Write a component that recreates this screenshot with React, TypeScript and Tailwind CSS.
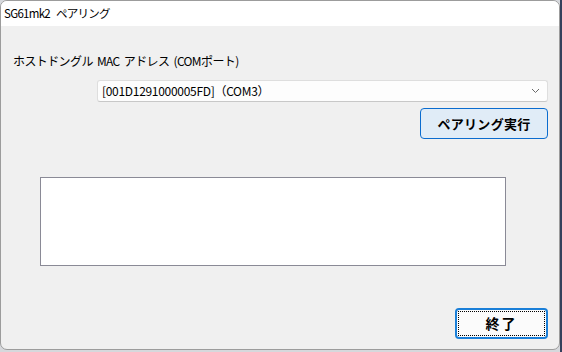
import React from 'react';

const jp = { fontFamily: '"Noto Sans CJK JP", "Noto Sans", sans-serif' };

export default function App() {
  return (
    <div className="w-[562px] h-[352px] bg-[#d6d8dc] flex" style={jp}>
      <div className="w-[560px] h-[350px] flex flex-col rounded-[7px] border border-[#9c9c9c] overflow-hidden bg-[#f0f0f0]">
        {/* title bar */}
        <div className="h-[25px] bg-white flex items-center pl-[3px] text-[11.5px] text-black tracking-[-0.7px] [word-spacing:4px]">
          SG61mk2 ペアリング
        </div>

        <div className="flex-1 flex flex-col pl-[12px] text-[12px] text-black">
          <div className="mt-[27px] h-[16px] leading-[16px] tracking-[-0.6px] [word-spacing:2px]">
            ホストドングル MAC アドレス (COMポート)
          </div>

          <div className="ml-[84px] w-[451px] flex flex-col items-end">
            <div className="mt-[11px] w-full h-[22px] bg-[#fdfdfd] border border-[#dedede] border-b-[#c8c8c8] rounded-[3px] flex items-center pl-[4px] pr-[7px]">
              <span className="flex-1 tracking-[-0.3px]">[001D1291000005FD]（COM3）</span>
              <svg width="9" height="6" viewBox="0 0 9 6">
                <path d="M1 1 L4.5 4.5 L8 1" fill="none" stroke="#6a6a6a" strokeWidth="1" />
              </svg>
            </div>
            <button className="mt-[6px] w-[128px] h-[31px] bg-[#e0ecf7] border border-[#0a6ccf] rounded-[4px] text-[13px] font-bold flex items-center justify-center tracking-[0.3px]">
              ペアリング実行
            </button>
          </div>

          <div className="mt-[38px] ml-[27px] w-[466px] h-[89px] bg-white border border-[#8a8a96]" />

          <div className="mt-[42px] ml-[442px] w-[93px] h-[31px] rounded-[4px] border-2 border-[#1a7fd8] bg-[#fbfbfb] p-[1px]">
            <button className="w-full h-full border border-dotted border-black text-[14px] font-bold flex items-center justify-center tracking-[2px]">
              終了
            </button>
          </div>
        </div>
      </div>
      <div className="flex-1 bg-[#34405c]" />
    </div>
  );
}
